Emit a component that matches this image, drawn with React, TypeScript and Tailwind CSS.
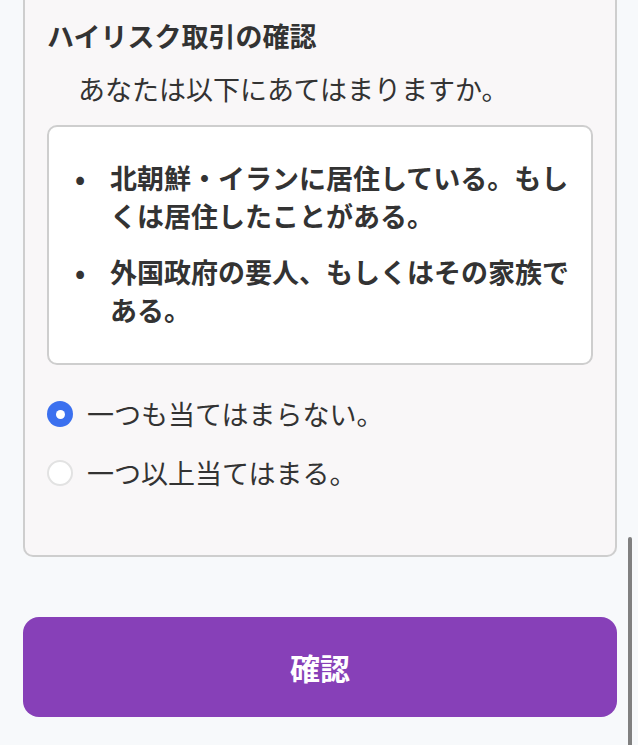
export default function App() {
  const font = { fontFamily: '"Noto Sans CJK JP", "Noto Sans", sans-serif' };
  return (
    <div
      className="relative min-h-[745px] w-full overflow-hidden bg-[#f7f9fb] text-[#333333]"
      style={font}
    >
      <div className="ml-[23px] mr-[21px] rounded-b-[10px] border-2 border-t-0 border-[#cecece] bg-[#f9f7f8] pb-[62px] pl-[22px] pr-[22px] pt-[16px]">
        <h2 className="text-[27px] font-bold leading-[40px]">ハイリスク取引の確認</h2>
        <p className="mt-[13px] pl-[31px] text-[27px] leading-[40px]">あなたは以下にあてはまりますか。</p>

        <div className="mt-[16px] rounded-[10px] border-2 border-[#cecece] bg-white pb-[34px] pl-[26px] pr-[18px] pt-[32px]">
          <ul className="flex flex-col gap-[18px] text-[27px] font-bold leading-[38px]">
            <li className="flex">
              <span className="w-[35px] shrink-0">•</span>
              <span>北朝鮮・イランに居住している。もしくは居住したことがある。</span>
            </li>
            <li className="flex">
              <span className="w-[35px] shrink-0">•</span>
              <span>外国政府の要人、もしくはその家族である。</span>
            </li>
          </ul>
        </div>

        <div className="mt-[29px] flex flex-col gap-[19px]">
          <label className="flex items-center gap-[14px]">
            <span className="flex h-[26px] w-[26px] items-center justify-center rounded-full bg-[#3b70ef]">
              <span className="h-[9px] w-[9px] rounded-full bg-white" />
            </span>
            <span className="text-[27px] leading-[40px]">一つも当てはまらない。</span>
          </label>
          <label className="flex items-center gap-[14px]">
            <span className="h-[26px] w-[26px] rounded-full border-2 border-[#e2e2e2] bg-white" />
            <span className="text-[27px] leading-[40px]">一つ以上当てはまる。</span>
          </label>
        </div>
      </div>

      <div className="ml-[23px] mr-[21px] mt-[60px]">
        <button className="flex h-[100px] w-full items-center justify-center rounded-[16px] bg-[#8740b8] text-[30px] font-bold text-white">
          確認
        </button>
      </div>

      <div className="absolute right-[6px] top-[537px] h-[220px] w-[4px] rounded-full bg-[#808080]" />
    </div>
  );
}
